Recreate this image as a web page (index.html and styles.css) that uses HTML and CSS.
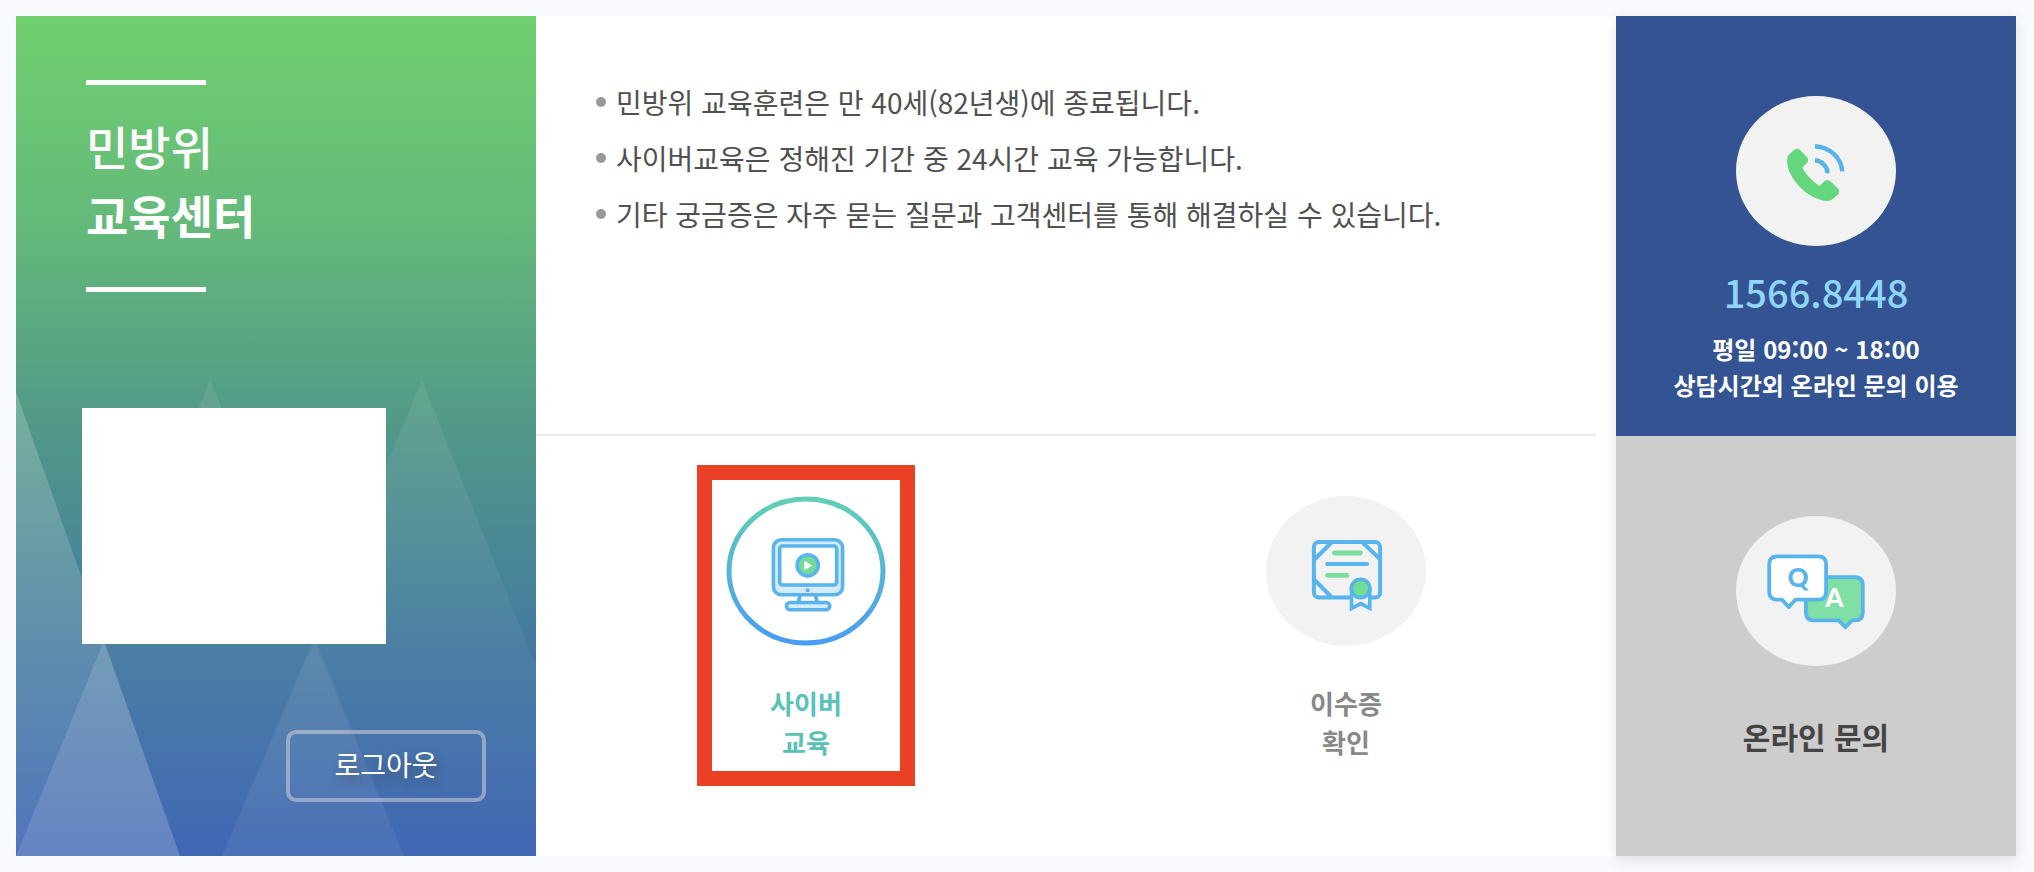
FILE: index.html
```html
<!DOCTYPE html>
<html lang="ko">
<head>
<meta charset="utf-8">
<meta name="viewport" content="width=device-width, initial-scale=1">
<title>민방위 교육센터</title>
<link rel="stylesheet" href="styles.css">
</head>
<body>
<div class="board">
  <section class="intro">
    <svg class="intro-art" viewBox="0 0 520 840" preserveAspectRatio="none" aria-hidden="true">
      <defs>
        <linearGradient id="peak" gradientUnits="userSpaceOnUse" x1="0" y1="365" x2="0" y2="840">
          <stop offset="0" stop-color="#fff" stop-opacity=".08"/>
          <stop offset="1" stop-color="#fff" stop-opacity=".01"/>
        </linearGradient>
        <linearGradient id="slope" gradientUnits="userSpaceOnUse" x1="0" y1="376" x2="0" y2="840">
          <stop offset="0" stop-color="#fff" stop-opacity=".2"/>
          <stop offset="1" stop-color="#fff" stop-opacity=".1"/>
        </linearGradient>
      </defs>
      <path d="M0 376 164 840H0Z" fill="url(#slope)"/>
      <path d="M194 364 388 840H0Z" fill="url(#peak)"/>
      <path d="M406 364 520 651V840H206Z" fill="url(#peak)"/>
      <path d="M88 625 164 840H0Z" fill="#fff" fill-opacity=".1"/>
      <path d="M298 625 388 840H206Z" fill="#fff" fill-opacity=".05"/>
    </svg>
    <h1 class="title"><span>민방위</span><strong>교육센터</strong></h1>
    <div class="profile"></div>
    <button class="logout" type="button">로그아웃</button>
  </section>

  <main class="main">
    <div class="notice">
      <ul class="notice-list">
        <li>민방위 교육훈련은 만 40세(82년생)에 종료됩니다.</li>
        <li>사이버교육은 정해진 기간 중 24시간 교육 가능합니다.</li>
        <li>기타 궁금증은 자주 묻는 질문과 고객센터를 통해 해결하실 수 있습니다.</li>
      </ul>
    </div>
    <nav class="menu">
      <a class="menu-item active" href="#cyber">
        <svg class="icon" viewBox="0 0 160 150" aria-hidden="true">
          <defs>
            <linearGradient id="ring" x1="0" y1="0" x2="0" y2="1">
              <stop offset="0" stop-color="#62cfb5"/>
              <stop offset=".5" stop-color="#55b5d5"/>
              <stop offset="1" stop-color="#4a9cf5"/>
            </linearGradient>
          </defs>
          <ellipse cx="80" cy="75" rx="77" ry="72" fill="#fff" stroke="url(#ring)" stroke-width="5"/>
          <g stroke="#59b4ec" stroke-width="3.6" fill="#d3ebfa">
            <rect x="47.4" y="43.8" width="69.2" height="55" rx="8"/>
            <rect x="53.7" y="50" width="57" height="39" rx="3" fill="#fff"/>
            <path d="M74 99 72.5 106M89.5 99 91 106"/>
            <rect x="60.4" y="106.5" width="43.4" height="7.2" rx="3.6"/>
            <circle cx="81.7" cy="69.3" r="10.6" fill="#72dc94"/>
          </g>
          <circle cx="81.7" cy="94.3" r="2" fill="#59b4ec"/>
          <path d="M78.8 65.6V73.4L85.4 69.5Z" fill="#fff" stroke="#fff" stroke-linejoin="round"/>
        </svg>
        <span class="menu-label">사이버<br>교육</span>
      </a>
      <a class="menu-item" href="#certificate">
        <svg class="icon" viewBox="0 0 160 150" aria-hidden="true">
          <ellipse cx="80" cy="75" rx="80" ry="75" fill="#f2f2f2"/>
          <g fill="none" stroke="#57b4ec" stroke-width="4">
            <rect x="47.9" y="45.9" width="66.2" height="55.6" rx="5"/>
            <path d="M65 47 49 63M97 47 114 63M49 84.5 65 100.5"/>
            <path d="M61.2 68H101" stroke-linecap="round"/>
            <path d="M85.5 92.7V112.4L94.6 107.6 103.8 112.4V92.7Z" fill="#f2f2f2" stroke-width="3.6"/>
            <circle cx="94.6" cy="92.5" r="9.3" fill="#72db96" stroke-width="3.6"/>
          </g>
          <path d="M68.4 57H94.4M61.6 79.3H81" fill="none" stroke="#7adc9d" stroke-width="4.8" stroke-linecap="round"/>
        </svg>
        <span class="menu-label">이수증<br>확인</span>
      </a>
    </nav>
  </main>

  <aside class="side">
    <section class="call">
      <svg class="icon" viewBox="0 0 160 150" aria-hidden="true">
        <ellipse cx="80" cy="75" rx="80" ry="75" fill="#f2f2f2"/>
        <path d="M58 54Q61 51.600 64 54L71 61Q73.400 64 71 66.800L66.300 71.600C70 79 76 85 83.500 90L88 85.500Q91.500 82.500 94.700 85.500L102 92.600Q104.300 95.700 102 98.400L96 103.500Q94 105 91 105C71 103 52 83 51 65Q50.800 61 53 58.500Z" fill="#63d67e"/>
        <path d="M79 50.200A29 27 0 0 1 106.300 75.300M79 64.300A14 13.500 0 0 1 91.600 77.300" fill="none" stroke="#56b3ec" stroke-width="4.400"/>
      </svg>
      <p class="phone">1566.8448</p>
      <p class="hours">평일 09:00 ~ 18:00<br>상담시간외 온라인 문의 이용</p>
    </section>
    <a class="ask" href="#ask">
      <svg class="icon" viewBox="0 0 160 150" aria-hidden="true">
        <ellipse cx="80" cy="75" rx="80" ry="75" fill="#f2f2f2"/>
        <g stroke="#57b4ec" stroke-width="3.800" stroke-linejoin="round">
          <path d="M78 61.200H118.800Q126.800 61.200 126.800 69.200V96.400Q126.800 104.400 118.800 104.400H116L109.300 111.300 102.600 104.400H77.900Q69.900 104.400 69.900 96.400V69.200Q69.900 61.200 78 61.200Z" fill="#80dfa4"/>
          <path d="M41.200 40.300H82.100Q90.100 40.300 90.100 48.300V75.700Q90.100 83.700 82.100 83.700H59.400L52.700 91 46 83.700H41.200Q33.200 83.700 33.200 75.700V48.300Q33.200 40.300 41.200 40.300Z" fill="#fff"/>
        </g>
        <text class="bubble-q" x="62" y="71" text-anchor="middle">Q</text>
        <text class="bubble-a" x="98.500" y="91" text-anchor="middle">A</text>
      </svg>
      <span class="ask-label">온라인 문의</span>
    </a>
  </aside>
</div>
</body>
</html>
```

FILE: styles.css
```css
* {
  box-sizing: border-box;
}

body {
  margin: 0;
  background: #f8f9fd;
  color: #505050;
  font-family: "Noto Sans CJK KR", "Noto Sans", sans-serif;
}

h1,
p,
ul {
  margin: 0;
  padding: 0;
}

a {
  color: inherit;
  text-decoration: none;
}

.board {
  display: grid;
  grid-template-columns: 26fr 54fr 20fr;
  min-height: 100vh;
  padding: 16px 18px 16px 16px;
}

.intro {
  position: relative;
  display: flex;
  flex-direction: column;
  align-items: flex-start;
  padding: 64px 50px 54px 66px;
  background: linear-gradient(#70d06f, #64b97a 25%, #519789 50%, #447b9f 74%, #3e65b4);
  color: #fff;
}

.intro-art {
  position: absolute;
  inset: 0;
  width: 100%;
  height: 100%;
}

.title {
  position: relative;
  display: flex;
  flex-direction: column;
  margin: 0 0 116px 4px;
  font-size: 46px;
  font-weight: 500;
  line-height: 69px;
}

.title::before,
.title::after {
  content: "";
  width: 120px;
  height: 5px;
  background: #fff;
}

.title::before {
  margin-bottom: 26px;
}

.title::after {
  margin-top: 38px;
}

.title strong {
  font-weight: 700;
}

.profile {
  position: relative;
  width: 304px;
  height: 236px;
  background: #fff;
}

.logout {
  position: relative;
  align-self: flex-end;
  width: 200px;
  height: 72px;
  margin-top: auto;
  padding: 0 0 4px;
  border: 4px solid rgba(200, 200, 215, .6);
  border-radius: 10px;
  background: none;
  color: #fff;
  font: inherit;
  font-size: 28px;
  text-shadow: 4px 6px 8px rgba(70, 60, 60, .45);
}

.main {
  display: grid;
  grid-template-rows: 1fr 1fr;
  background: #fff;
}

.notice {
  margin-right: 20px;
  padding: 58px 0 0 60px;
  border-bottom: 2px solid #e9e9e9;
}

.notice-list {
  font-size: 28px;
  line-height: 56px;
  list-style: none;
}

.notice-list li {
  display: flex;
  align-items: center;
  gap: 10px;
}

.notice-list li::before {
  content: "";
  flex: none;
  width: 10px;
  height: 10px;
  border-radius: 50%;
  background: #999;
}

.menu {
  display: grid;
  grid-template-columns: 1fr 1fr;
  align-items: start;
  justify-items: center;
  padding-top: 29px;
}

.menu-item {
  display: flex;
  flex-direction: column;
  align-items: center;
  width: 218px;
  padding: 16px 0 10px;
  border: 15px solid transparent;
  color: #888;
  font-size: 26px;
  font-weight: 700;
  line-height: 39px;
  text-align: center;
}

.menu-item.active {
  border-color: #ea4026;
  color: #58c2b7;
}

.icon {
  display: block;
  width: 160px;
  height: 150px;
}

.menu-label {
  margin-top: 37px;
}

.side {
  display: grid;
  grid-template-rows: 1fr 1fr;
  box-shadow: 0 4px 12px rgba(0, 0, 0, .1);
  text-align: center;
}

.call,
.ask {
  display: flex;
  flex-direction: column;
  align-items: center;
  padding-top: 80px;
}

.call {
  background: #345392;
  color: #fff;
}

.phone {
  margin-top: 20px;
  color: #8fd6fb;
  font-size: 38px;
  font-weight: 500;
  line-height: 52px;
}

.hours {
  margin-top: 13px;
  font-size: 24px;
  font-weight: 700;
  line-height: 36px;
}

.ask {
  background: #cdcdcd;
  color: #444;
}

.ask-label {
  margin-top: 48px;
  font-size: 30px;
  font-weight: 700;
  line-height: 44px;
}

.bubble-q,
.bubble-a {
  font-family: Lato, sans-serif;
  font-size: 26px;
  font-weight: 900;
}

.bubble-q {
  fill: #57b4ec;
}

.bubble-a {
  fill: #fff;
}
```
